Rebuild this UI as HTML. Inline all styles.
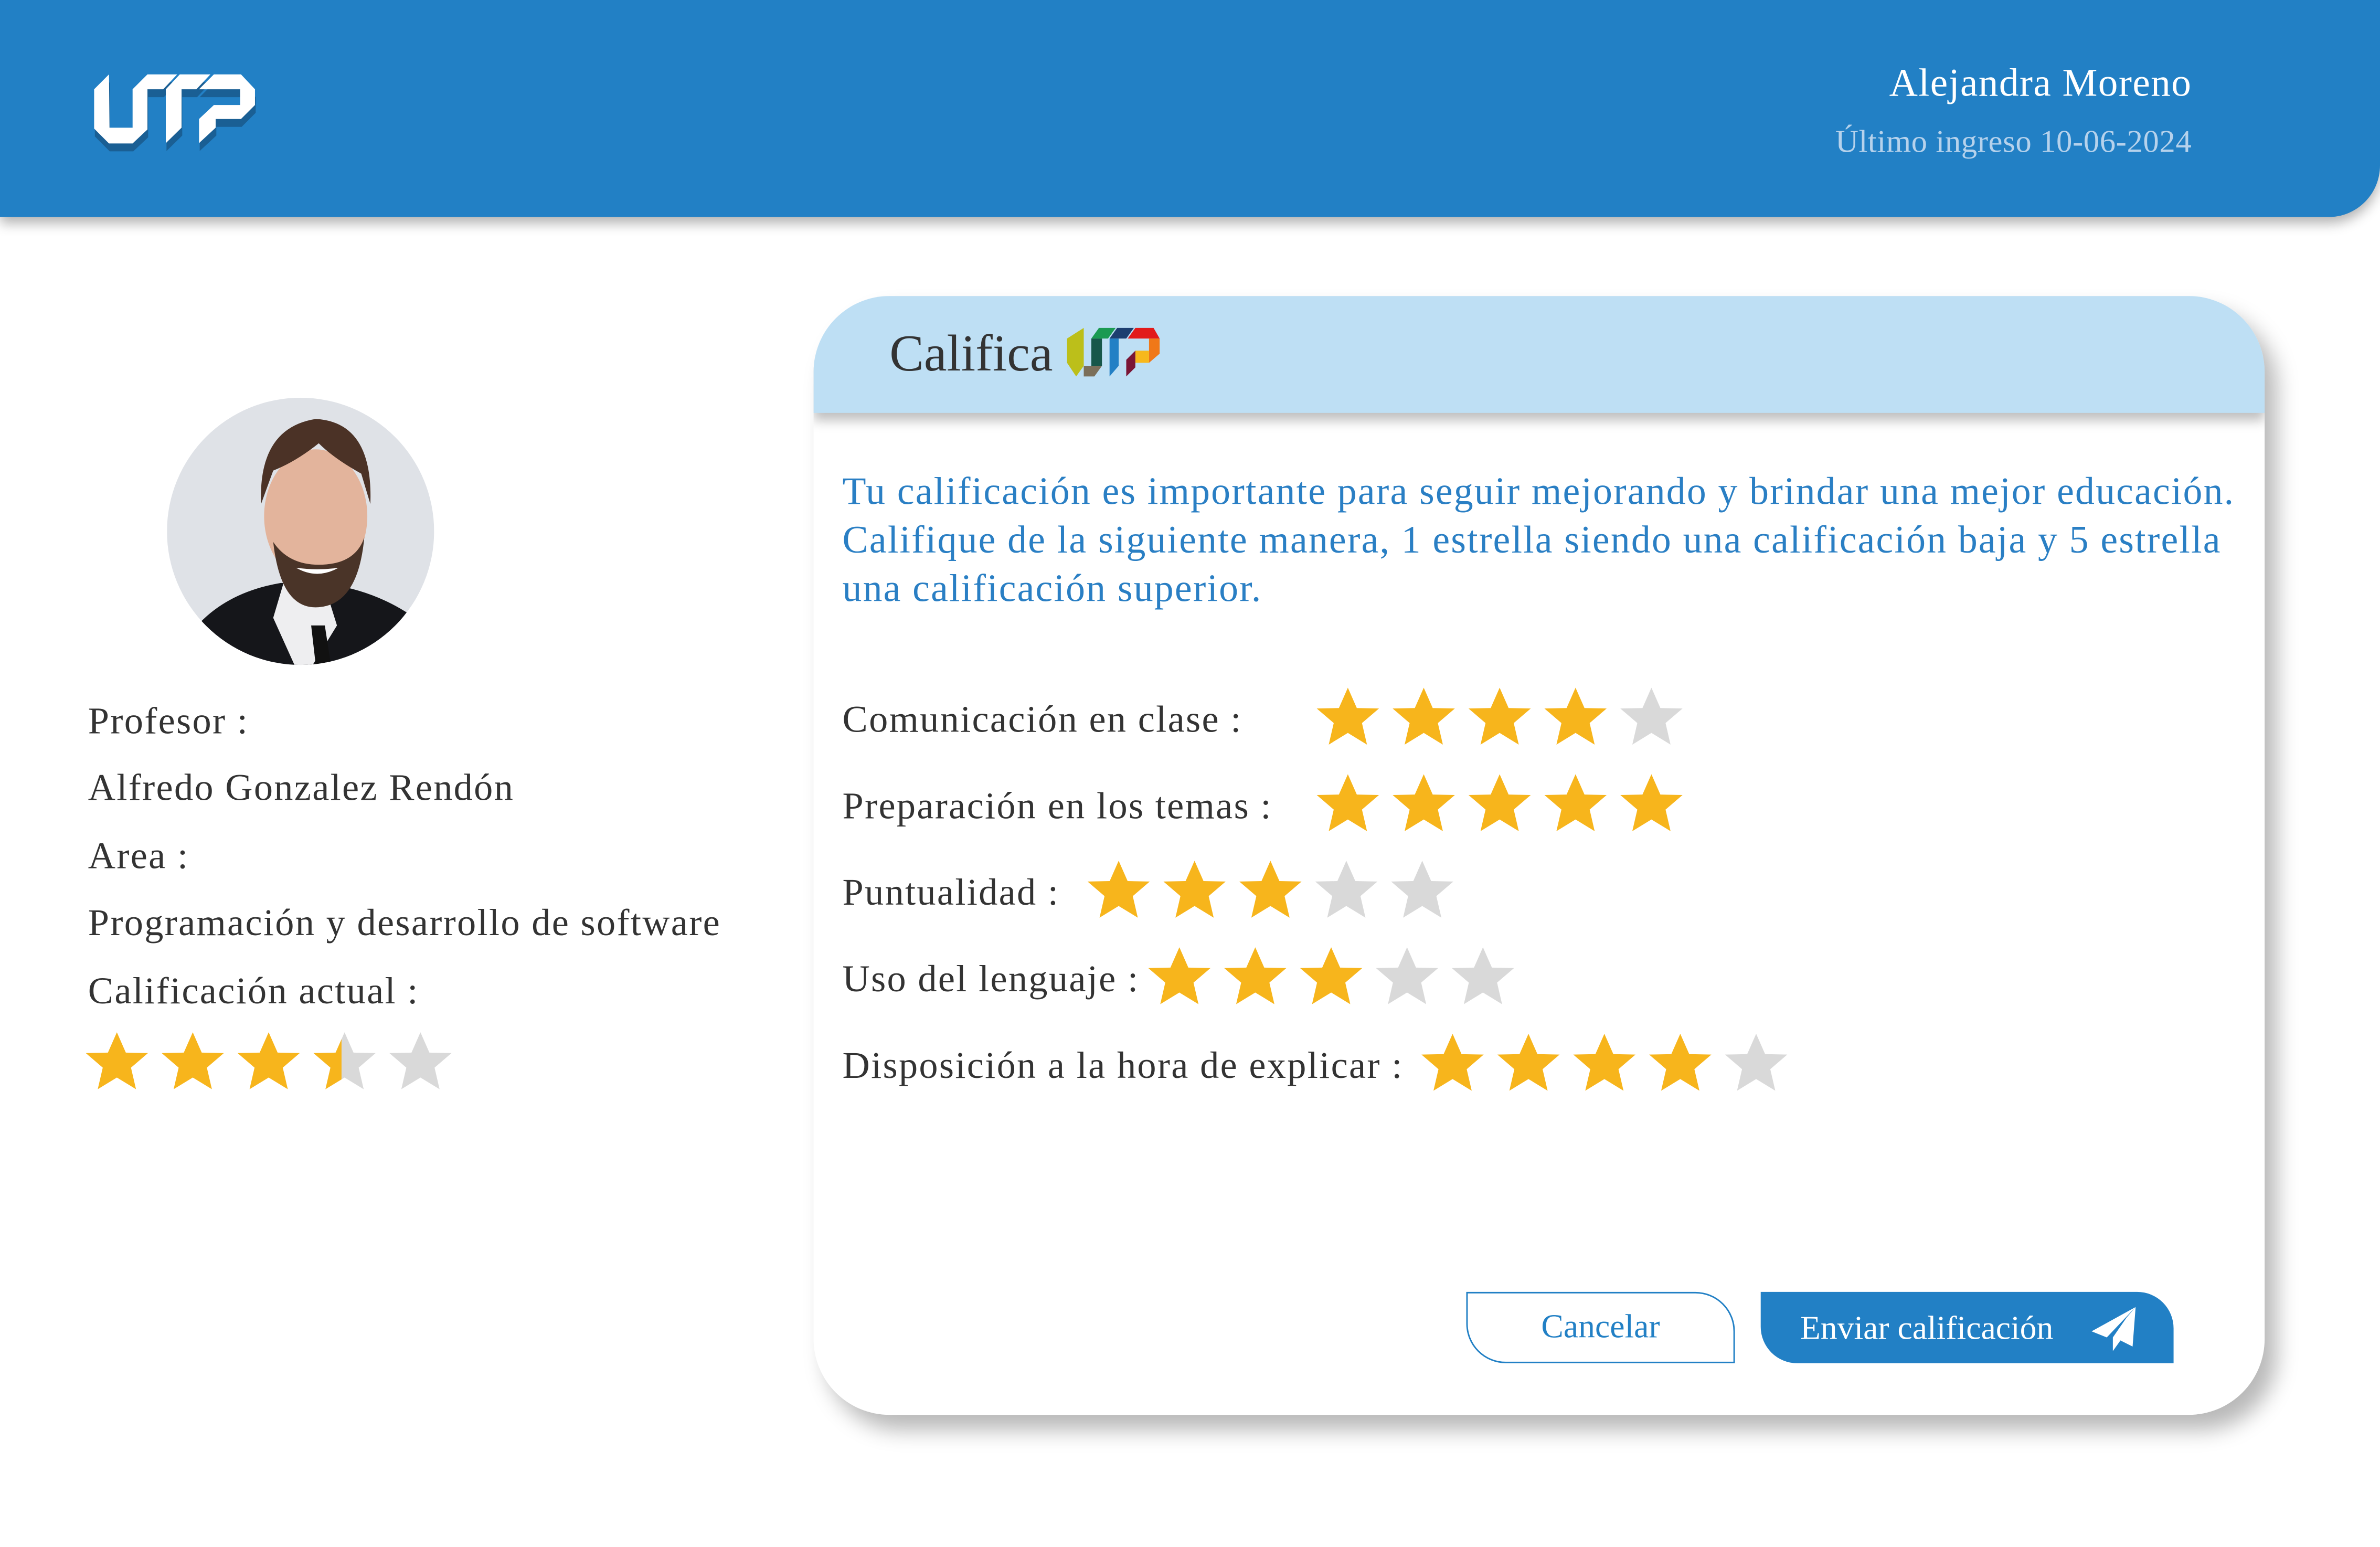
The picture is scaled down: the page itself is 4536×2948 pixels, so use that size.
<!DOCTYPE html>
<html><head><meta charset="utf-8">
<style>
html,body{margin:0;padding:0;background:#fff;overflow:hidden;}
body{width:4536px;height:2946px;}
#w{position:absolute;left:0;top:0;width:1568px;height:1019px;transform:scale(2.892857);transform-origin:0 0;font-family:"Liberation Serif",serif;}
.abs{position:absolute;}
.hdr{left:0;top:0;width:1568px;height:143px;background:#2280c5;border-bottom-right-radius:34px;box-shadow:0 4px 8px rgba(0,0,0,.3);}
.t{position:absolute;white-space:nowrap;line-height:1;}
.card{left:536px;top:195px;width:956px;height:737px;background:#fff;border-radius:50px;box-shadow:8px 10px 14px rgba(0,0,0,.28);overflow:hidden;}
.band{left:0;top:0;width:956px;height:77px;background:#bedff4;box-shadow:0 5px 7px rgba(0,0,0,.25);}
.lbl{font-size:25px;color:#333;letter-spacing:0.8px;}
.blue{color:#2a7fc4;font-size:25.5px;letter-spacing:0.75px;}
</style></head><body><div id="w">
<svg width="0" height="0" style="position:absolute"><defs>
<polygon id="st" points="0,-20 5.9,-6.6 20.5,-6.3 9.3,3.3 12.6,17.5 0,9.8 -12.6,17.5 -9.3,3.3 -20.5,-6.3 -5.9,-6.6"/>
<clipPath id="half"><rect x="-21" y="-21" width="19" height="42"/></clipPath>
</defs></svg>

<div class="abs hdr"></div>
<!-- UTP logo white -->
<svg class="abs" style="left:62.2px;top:48.9px;overflow:visible" width="106" height="45.5" viewBox="240 185 920 395">
<g fill="#1a5f94" transform="translate(4,45)">
<path d="M240,270 L325,185 L328,490 L460,490 L460,270 L545,185 L715,185 L635,270 L545,270 L545,500 L460,580 L325,580 L240,495 Z"/>
<path d="M650,270 L730,185 L905,185 L825,270 L740,270 L740,490 L650,578 Z"/>
<path d="M840,270 L925,185 L1080,185 L1160,270 L1160,360 L1080,440 L935,440 L935,490 L840,578 L840,440 L925,360 L1075,360 L1075,270 Z"/>
</g>
<g fill="#fff">
<path d="M240,270 L325,185 L328,490 L460,490 L460,270 L545,185 L715,185 L635,270 L545,270 L545,500 L460,580 L325,580 L240,495 Z"/>
<path d="M650,270 L730,185 L905,185 L825,270 L740,270 L740,490 L650,578 Z"/>
<path d="M840,270 L925,185 L1080,185 L1160,270 L1160,360 L1080,440 L935,440 L935,490 L840,578 L840,440 L925,360 L1075,360 L1075,270 Z"/>
</g>
</svg>
<div class="t" style="right:124px;top:42px;font-size:26px;color:#fff;letter-spacing:0.5px;">Alejandra Moreno</div>
<div class="t" style="right:124px;top:83px;font-size:21px;color:#b6d2ec;letter-spacing:0.2px;">Último ingreso 10-06-2024</div>

<!-- photo -->
<svg class="abs" style="left:110px;top:262px" width="176" height="176" viewBox="0 0 176 176">
<defs><clipPath id="cc"><circle cx="88" cy="88" r="88"/></clipPath></defs>
<g clip-path="url(#cc)">
<rect width="176" height="176" fill="#dfe2e7"/>
<path d="M20,150 Q40,128 75,122 L100,122 Q140,126 170,150 L176,176 L0,176 Z" fill="#15161a"/>
<path d="M78,118 L102,118 L112,150 L96,176 L84,176 L70,145 Z" fill="#eeeef0"/>
<path d="M95,150 L104,150 L108,176 L98,176 Z" fill="#111"/>
<ellipse cx="98" cy="78" rx="34" ry="44" fill="#e3b49c"/>
<path d="M70,95 Q75,140 100,138 Q126,136 130,92 Q124,110 100,110 Q80,110 70,95 Z" fill="#4a3428"/>
<path d="M62,70 Q60,20 98,14 Q136,16 134,70 L128,50 Q110,40 100,30 Q85,42 70,48 Z" fill="#4b3226"/>
<path d="M85,112 Q99,120 113,112 Q99,114 85,112 Z" fill="#fff"/>
</g></svg>

<div class="t lbl" style="left:58px;top:463px;">Profesor :</div>
<div class="t lbl" style="left:58px;top:507px;">Alfredo Gonzalez Rendón</div>
<div class="t lbl" style="left:58px;top:552px;">Area :</div>
<div class="t lbl" style="left:58px;top:596px;">Programación y desarrollo de software</div>
<div class="t lbl" style="left:58px;top:641px;">Calificación actual :</div>
<svg class="abs" style="left:50px;top:675px" width="260" height="50">
<g transform="translate(27,25)"><use href="#st" fill="#f7b51c"/></g>
<g transform="translate(77,25)"><use href="#st" fill="#f7b51c"/></g>
<g transform="translate(127,25)"><use href="#st" fill="#f7b51c"/></g>
<g transform="translate(177,25)"><use href="#st" fill="#d9d9d9"/><use href="#st" fill="#f7b51c" clip-path="url(#half)"/></g>
<g transform="translate(227,25)"><use href="#st" fill="#d9d9d9"/></g>
</svg>

<div class="abs card">
<div class="abs band"></div>
<div class="t" style="left:50px;top:22px;font-size:34px;color:#333;">Califica</div>
<svg class="abs" style="left:166px;top:20px" width="70" height="34" viewBox="0 0 70 34">
<path d="M12,1 L12,26 L7,33 L1,24 L1,8 Z" fill="#bcbf1a"/>
<path d="M12,26 L24,26 L19,33 L12,33 Z" fill="#7b6f5a"/>
<path d="M17,8 L24,8 L24,26 L17,26 Z" fill="#17574a"/>
<path d="M17,8 L22,1 L33,1 L28,8 Z" fill="#1a9a52"/>
<path d="M29,8 L34,1 L45,1 L40,8 Z" fill="#1d3f70"/>
<path d="M29,8 L35,8 L35,26 L29,33 Z" fill="#2280c5"/>
<path d="M41,8 L46,1 L58,1 L62,8 Z" fill="#e21a1a"/>
<path d="M55,8 L62,8 L62,18 L55,24 Z" fill="#f07818"/>
<path d="M46,16 L55,16 L55,24 L46,24 Z" fill="#f7b81c"/>
<path d="M40,22 L46,16 L46,27 L40,33 Z" fill="#7a1535"/>
</svg>
<div class="t blue" style="left:19px;top:116px;">Tu calificación es importante para seguir mejorando y brindar una mejor educación.</div>
<div class="t blue" style="left:19px;top:148px;">Califique de la siguiente manera, 1 estrella siendo una calificación baja y 5 estrella</div>
<div class="t blue" style="left:19px;top:180px;">una calificación superior.</div>

<div class="t lbl" style="left:19px;top:267px;">Comunicación en clase :</div>
<div class="t lbl" style="left:19px;top:324px;">Preparación en los temas :</div>
<div class="t lbl" style="left:19px;top:381px;">Puntualidad :</div>
<div class="t lbl" style="left:19px;top:438px;">Uso del lenguaje :</div>
<div class="t lbl" style="left:19px;top:495px;">Disposición a la hora de explicar :</div>

<svg class="abs" style="left:0;top:0" width="956" height="737">
<g fill="#f7b51c">
<use href="#st" x="352" y="278"/><use href="#st" x="402" y="278"/><use href="#st" x="452" y="278"/><use href="#st" x="502" y="278"/>
<use href="#st" x="352" y="335"/><use href="#st" x="402" y="335"/><use href="#st" x="452" y="335"/><use href="#st" x="502" y="335"/><use href="#st" x="552" y="335"/>
<use href="#st" x="201" y="392"/><use href="#st" x="251" y="392"/><use href="#st" x="301" y="392"/>
<use href="#st" x="241" y="449"/><use href="#st" x="291" y="449"/><use href="#st" x="341" y="449"/>
<use href="#st" x="421" y="506"/><use href="#st" x="471" y="506"/><use href="#st" x="521" y="506"/><use href="#st" x="571" y="506"/>
</g>
<g fill="#d9d9d9">
<use href="#st" x="552" y="278"/>
<use href="#st" x="351" y="392"/><use href="#st" x="401" y="392"/>
<use href="#st" x="391" y="449"/><use href="#st" x="441" y="449"/>
<use href="#st" x="621" y="506"/>
</g>
</svg>

<div class="abs" style="left:430px;top:656px;width:177px;height:47px;border:1.5px solid #2280c5;border-radius:0 26px 0 26px;box-sizing:border-box;"></div>
<div class="t" style="left:430px;top:668px;width:177px;text-align:center;font-size:22px;color:#2280c5;">Cancelar</div>
<div class="abs" style="left:624px;top:656px;width:272px;height:47px;background:#2280c5;border-radius:0 24px 0 24px;"></div>
<div class="t" style="left:650px;top:669px;font-size:22px;color:#fff;">Enviar calificación</div>
</div>
<svg class="abs" style="left:0;top:0" width="1568" height="1019">
<path d="M1407,861 L1378,877 L1388,881 Z" fill="#fff"/>
<path d="M1407,861 L1401,868 L1392,881 L1392,890 L1397,883 L1405,887 Z" fill="#fff"/>
</svg>
</div></body></html>
